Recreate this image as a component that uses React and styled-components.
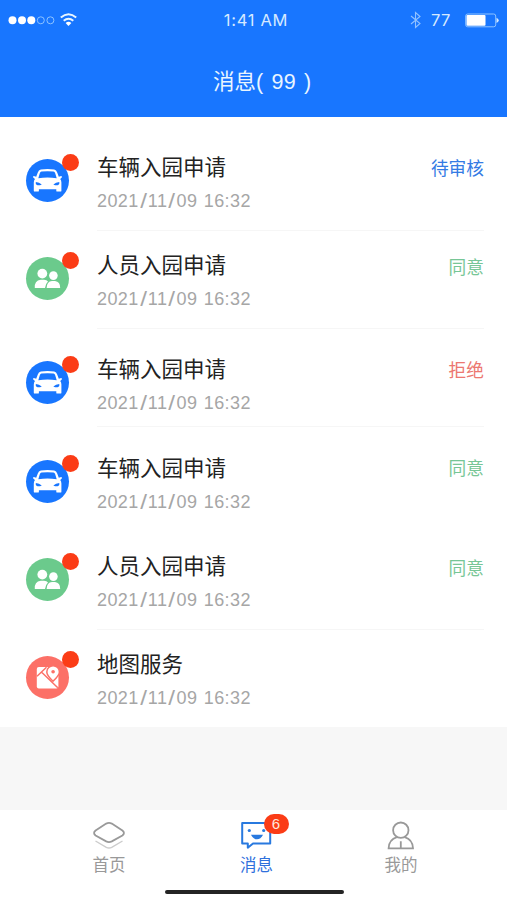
import React from "react";
import styled, { createGlobalStyle } from "styled-components";

const Global = createGlobalStyle`
  * { box-sizing: border-box; }
  body { margin: 0; background: #fff; }
`;

const latin = `"Liberation Sans", "Noto Sans CJK SC", sans-serif`;

const Screen = styled.div`
  width: 507px;
  height: 900px;
  overflow: hidden;
  display: flex;
  flex-direction: column;
  background: #f7f7f7;
  font-family: ${latin};
`;

const Header = styled.header`
  height: 117px;
  flex: none;
  background: #1876ff;
  color: #e9f5ff;
`;

const StatusBar = styled.div`
  height: 40px;
  padding: 0 8px;
  display: grid;
  grid-template-columns: 1fr auto 1fr;
  align-items: center;
`;

const Signal = styled.svg`
  display: block;
  width: 72px;
  height: 16px;
`;

const Clock = styled.span`
  font-family: Inter, sans-serif;
  font-size: 16.5px;
  line-height: 20px;
  letter-spacing: 0.7px;
  color: #d5e9ff;
  padding-left: 5px;
`;

const StatusRight = styled.div`
  display: flex;
  justify-content: flex-end;
  align-items: center;
`;

const Battery = styled.span`
  width: 20px;
  margin: 0 14px 0 10px;
  font-family: Inter, sans-serif;
  font-size: 16.5px;
  line-height: 20px;
  letter-spacing: 0.3px;
  color: #d5e9ff;
`;

const Title = styled.h1`
  margin: 0;
  padding: 26px 0 0 213px;
  font-size: 21.5px;
  line-height: 32px;
  font-weight: 400;
  display: flex;
  white-space: pre;
`;

const Count = styled.span`
  letter-spacing: 0.4px;
  word-spacing: 1.5px;
`;

const List = styled.main`
  height: 610px;
  flex: none;
  padding-top: 15px;
  background: #fff;
`;

const Row = styled.article`
  height: ${(p) => p.$height}px;
  display: flex;
  align-items: flex-start;
  padding: 0 23px 0 26px;
`;

const Avatar = styled.div`
  position: relative;
  width: 43px;
  height: 43px;
  margin-top: 27px;
  flex: none;
  border-radius: 50%;
  background: ${(p) => p.$color};

  svg { display: block; width: 43px; height: 43px; }
`;

const Dot = styled.span`
  position: absolute;
  top: -5px;
  right: -9.5px;
  width: 17px;
  height: 17px;
  border-radius: 50%;
  background: #fb3c16;
`;

const Content = styled.div`
  flex: 1;
  height: ${(p) => p.$height}px;
  margin-left: 28px;
  display: flex;
  justify-content: space-between;
  border-bottom: 1px solid ${(p) => (p.$line ? "#f6f6f6" : "transparent")};
`;

const Subject = styled.h2`
  margin: 20px 0 0;
  font-size: 21.5px;
  line-height: 32px;
  font-weight: 400;
  color: #222;
`;

const Time = styled.time`
  display: block;
  height: 22px;
  margin-top: 6px;
  font-size: 18px;
  line-height: 22px;
  letter-spacing: 0.4px;
  word-spacing: 1px;
  color: #a6a6a6;
`;

const Slash = styled.span`
  display: inline-block;
  width: 9.2px;
  text-align: center;
  letter-spacing: 0;
  transform: scale(1.35, 1.12);
`;

const State = styled.span`
  margin-top: ${(p) => p.$top}px;
  height: 26px;
  font-size: 17.7px;
  line-height: 26px;
  color: ${(p) => p.$color};
`;

const TabBar = styled.nav`
  height: 90px;
  margin-top: auto;
  flex: none;
  background: #fff;
  display: flex;
  flex-direction: column;
  align-items: center;
`;

const Tabs = styled.div`
  width: 438px;
  height: 79px;
  flex: none;
  margin-left: 3px;
  display: grid;
  grid-template-columns: repeat(3, 146px);
`;

const Tab = styled.div`
  display: flex;
  flex-direction: column;
  align-items: center;
  padding: 8px 0 0 ${(p) => (p.$active ? 3 : 0)}px;
  font-size: 16.5px;
  line-height: 27px;
  color: ${(p) => (p.$active ? "#2f70dc" : "#999")};
`;

const TabIcon = styled.div`
  position: relative;
  height: 34px;

  svg { display: block; width: 36px; height: 34px; }
`;

const Badge = styled.span`
  position: absolute;
  left: 25px;
  top: -4px;
  width: 25px;
  height: 20px;
  border-radius: 10px;
  background: #fb3c16;
  color: #ffe6dc;
  font-size: 15px;
  line-height: 20px;
  text-align: center;
`;

const HomeBar = styled.div`
  width: 179px;
  height: 4px;
  margin-top: 1px;
  margin-left: 1px;
  border-radius: 2px;
  background: #242424;
`;

const CarIcon = () => (
  <svg viewBox="0 0 43 43">
    <path fill="#fff" d="M14.8 10.6Q21.5 9.6 28.2 10.6Q30.4 11 31.2 13.4L32.8 17.8L35.2 17Q36.3 17.3 35.8 18.5L34.2 20Q35.4 21.3 35.4 23.5V31.7Q35.4 32.6 34.5 32.6H31.2Q30.3 32.6 30.3 31.7V30.2H12.9V31.7Q12.9 32.6 12 32.6H8.7Q7.8 32.6 7.8 31.7V23.5Q7.8 21.3 9 20L7.2 18.5Q6.7 17.3 7.8 17L10.2 17.8L11.8 13.4Q12.6 11 14.8 10.6Z" />
    <path fill="#1876ff" d="M15.5 12.6Q21.5 11.8 27.5 12.6Q28.7 12.8 29.2 14.2L30.7 19.2Q21.5 18 12.3 19.2L13.8 14.2Q14.3 12.8 15.5 12.6ZM9.8 22.9Q13.2 22.9 15.8 25.4Q13.2 26.7 10.9 26.1Q9.3 25.5 9.8 22.9ZM33.3 22.9Q29.9 22.9 27.3 25.4Q29.9 26.7 32.2 26.1Q33.8 25.5 33.3 22.9Z" />
  </svg>
);

const PeopleIcon = () => (
  <svg viewBox="0 0 43 43" fill="#fff">
    <circle cx="16.3" cy="16.6" r="4.9" />
    <circle cx="27.4" cy="18.6" r="4.3" />
    <path d="M8.8 31Q8.2 23.6 14.8 22.8H18Q20.8 23 22 24.4Q19.2 27 19 31Z" />
    <path d="M20.6 31Q20.8 24.2 26 23.9H29Q34.2 24.4 34.2 31Z" />
  </svg>
);

const MapIcon = () => (
  <svg viewBox="0 0 43 43">
    <rect x="10.8" y="11" width="21.6" height="21.5" rx="2" fill="#fff" />
    <path d="M11 20.2L20.5 11.3M15.4 16L31.8 31.8" fill="none" stroke="#fc7067" strokeWidth="1.5" />
    <path d="M27 25.3Q20.8 19.2 20.8 16A6.3 6.3 0 0 1 33.4 16Q33.4 19.2 27 25.3Z" fill="#fff" stroke="#fc7067" strokeWidth="1.5" />
    <circle cx="27.1" cy="15.7" r="1.8" fill="#fc7067" />
  </svg>
);

const kinds = {
  car: { color: "#1876ff", Icon: CarIcon },
  people: { color: "#6bca8c", Icon: PeopleIcon },
  map: { color: "#fc7067", Icon: MapIcon },
};

const messages = [
  { kind: "car", subject: "车辆入园申请", state: "待审核", color: "#347be4", height: 98, top: 24, line: true },
  { kind: "people", subject: "人员入园申请", state: "同意", color: "#77c696", height: 104, top: 25, line: true },
  { kind: "car", subject: "车辆入园申请", state: "拒绝", color: "#ec7770", height: 99, top: 24, line: true, body: 93 },
  { kind: "car", subject: "车辆入园申请", state: "同意", color: "#77c696", height: 98, top: 23, line: false },
  { kind: "people", subject: "人员入园申请", state: "同意", color: "#77c696", height: 98, top: 25, line: true },
  { kind: "map", subject: "地图服务", height: 98, top: 24, line: false },
];

function Message({ item }) {
  const { color, Icon } = kinds[item.kind];
  return (
    <Row $height={item.height}>
      <Avatar $color={color}><Icon /><Dot /></Avatar>
      <Content $line={item.line} $height={item.body || 99}>
        <div>
          <Subject>{item.subject}</Subject>
          <Time>2021<Slash>/</Slash>11<Slash>/</Slash>09 16:32</Time>
        </div>
        {item.state && <State $color={item.color} $top={item.top}>{item.state}</State>}
      </Content>
    </Row>
  );
}

export default function App() {
  return (
    <Screen>
      <Global />
      <Header>
        <StatusBar>
          <Signal viewBox="0 0 72 16">
            <g fill="#fff">
              <circle cx="4.5" cy="8.3" r="4" />
              <circle cx="14" cy="8.3" r="4" />
              <circle cx="23.3" cy="8.3" r="4" />
            </g>
            <g fill="none" stroke="#8dc3ff" strokeWidth="1">
              <circle cx="32.8" cy="8.3" r="3.5" />
              <circle cx="42.4" cy="8.3" r="3.5" />
            </g>
            <g fill="none" stroke="#e9f6ff" strokeWidth="2">
              <path d="M52.8 5.6Q60.5 -1 68.2 5.6" />
              <path d="M55.7 8.8Q60.5 4.8 65.3 8.8" />
            </g>
            <path d="M57.6 11Q60.5 8.7 63.4 11L60.5 14Z" fill="#fff" />
          </Signal>
          <Clock>1:41 AM</Clock>
          <StatusRight>
            <svg width="11" height="18" viewBox="0 0 11 18">
              <path d="M1 5L10 12.5L5.5 16.5V1.5L10 5.5L1 13" fill="none" stroke="#91c1ff" strokeWidth="1.1" />
            </svg>
            <Battery>77</Battery>
            <svg width="34" height="15" viewBox="0 0 34 15">
              <rect x="0.7" y="1" width="30" height="12.8" rx="2" fill="none" stroke="#8fc4ff" />
              <rect x="1.5" y="2" width="19" height="10.8" rx="1" fill="#fff" />
              <path d="M31.5 4.8Q36 7.4 31.5 10Z" fill="#d5eaff" />
            </svg>
          </StatusRight>
        </StatusBar>
        <Title>消息<Count>( 99 )</Count></Title>
      </Header>
      <List>
        {messages.map((item, i) => <Message key={i} item={item} />)}
      </List>
      <TabBar>
        <Tabs>
          <Tab>
            <TabIcon>
              <svg viewBox="0 0 36 34" fill="none">
                <path d="M15.2 5.6Q18 4.3 20.8 5.6L31.4 12.5Q34.5 15 31.4 17.5L20.8 23.4Q18 24.7 15.2 23.4L4.6 17.5Q1.5 15 4.6 12.5Z" stroke="#999" strokeWidth="1.8" />
                <path d="M4.5 23L15.3 29.3Q18 30.7 20.7 29.3L31.5 23" stroke="#ccc" strokeWidth="1.4" />
              </svg>
            </TabIcon>
            首页
          </Tab>
          <Tab $active>
            <TabIcon>
              <svg viewBox="0 0 36 34" fill="none" stroke="#2879df">
                <path d="M3.2 5H31.2V25.4H14L8.8 29.7V25.4H3.2Z" strokeWidth="2" strokeLinejoin="round" />
                <path d="M12 16.8H24Q21.7 21.3 18 21.3Q14.3 21.3 12 16.8Z" fill="#2879df" stroke="none" />
                <circle cx="10.3" cy="12.5" r="1.6" fill="#2879df" stroke="none" />
                <circle cx="24.7" cy="12.5" r="1.6" fill="#2879df" stroke="none" />
              </svg>
              <Badge>6</Badge>
            </TabIcon>
            消息
          </Tab>
          <Tab>
            <TabIcon>
              <svg viewBox="0 0 36 34" fill="none" stroke="#999" strokeWidth="1.8">
                <circle cx="17.8" cy="12.2" r="7.7" />
                <path d="M13.9 19.2Q6 21.5 5.6 30.4H30Q29.6 21.5 21.7 19.2M17.8 23.3V30" />
              </svg>
            </TabIcon>
            我的
          </Tab>
        </Tabs>
        <HomeBar />
      </TabBar>
    </Screen>
  );
}
